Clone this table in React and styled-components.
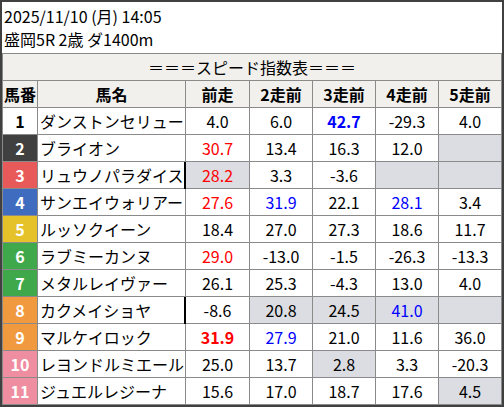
import React from "react";
import styled, { createGlobalStyle } from "styled-components";

const Global = createGlobalStyle`
  html, body { margin: 0; padding: 0; background: #ffffff; }
  body { font-family: "Noto Sans CJK JP", "Noto Sans", sans-serif; color: #000; }
`;

const Frame = styled.div`
  box-sizing: border-box;
  width: 504px;
  height: 407px;
  border: 2px solid #404040;
  background: #fff;
  display: flex;
  flex-direction: column;
`;

const Info = styled.div`
  height: 51px;
  box-sizing: border-box;
  padding: 3px 0 0 2px;
  font-size: 16px;
  line-height: 23px;
`;

const InfoLine = styled.div`
  white-space: nowrap;
`;

const Table = styled.div`
  display: grid;
  grid-template-columns: 35px 148px 64px 63px 63px 63px 63px;
  grid-auto-rows: 27px;
  border-top: 1px solid #8a8a8a;
  border-left: 1px solid #8a8a8a;
  font-size: 16px;
`;

const Cell = styled.div`
  box-sizing: border-box;
  border-right: 1px solid #8a8a8a;
  border-bottom: 1px solid #8a8a8a;
  line-height: 26px;
  white-space: nowrap;
  overflow: hidden;
`;

const Title = styled(Cell)`
  grid-column: 1 / -1;
  background: #f1f0ec;
  text-align: center;
`;

const Head = styled(Cell)`
  background: #f1f0ec;
  text-align: center;
  font-weight: 700;
`;

const Waku = styled(Cell)`
  text-align: center;
  font-weight: 700;
  background: ${(p) => p.$bg};
  color: ${(p) => p.$fg};
`;

const Name = styled(Cell)`
  padding-left: 2px;
`;

const Score = styled(Cell)`
  position: relative;
  overflow: visible;
  text-align: center;
  background: ${(p) => (p.$gray ? "#dcdde2" : "#ffffff")};
  color: ${(p) => (p.$c === "r" ? "#ff0000" : p.$c === "b" ? "#0000ff" : "#000000")};
  font-weight: ${(p) => (p.$bold ? 700 : 400)};
  &::before {
    content: "";
    display: ${(p) => (p.$mark ? "block" : "none")};
    position: absolute;
    left: -2px;
    top: 0;
    bottom: -1px;
    width: 2px;
    background: #000;
  }
`;

const W = {
  1: ["#ffffff", "#000000"],
  2: ["#404040", "#ffffff"],
  3: ["#e85a5a", "#ffffff"],
  4: ["#3f6cbf", "#ffffff"],
  5: ["#e6c22a", "#ffffff"],
  6: ["#3fa84a", "#ffffff"],
  7: ["#3fa84a", "#ffffff"],
  8: ["#f0993e", "#ffffff"],
  9: ["#f0993e", "#ffffff"],
  10: ["#ef8ea0", "#ffffff"],
  11: ["#ef8ea0", "#ffffff"],
};

// v: value, c: colour (r/b), B: bold, g: gray, m: mark
const rows = [
  { n: 1, name: "ダンストンセリュー", s: [{ v: "4.0" }, { v: "6.0" }, { v: "42.7", c: "b", B: 1 }, { v: "-29.3" }, { v: "4.0" }] },
  { n: 2, name: "ブライオン", s: [{ v: "30.7", c: "r" }, { v: "13.4" }, { v: "16.3" }, { v: "12.0" }, { v: "", g: 1 }] },
  { n: 3, name: "リュウノパラダイス", s: [{ v: "28.2", c: "r", g: 1, m: 1 }, { v: "3.3" }, { v: "-3.6" }, { v: "", g: 1 }, { v: "", g: 1 }] },
  { n: 4, name: "サンエイウォリアー", s: [{ v: "27.6", c: "r" }, { v: "31.9", c: "b" }, { v: "22.1" }, { v: "28.1", c: "b" }, { v: "3.4" }] },
  { n: 5, name: "ルッソクイーン", s: [{ v: "18.4" }, { v: "27.0" }, { v: "27.3" }, { v: "18.6" }, { v: "11.7" }] },
  { n: 6, name: "ラブミーカンヌ", s: [{ v: "29.0", c: "r" }, { v: "-13.0" }, { v: "-1.5" }, { v: "-26.3" }, { v: "-13.3" }] },
  { n: 7, name: "メタルレイヴァー", s: [{ v: "26.1" }, { v: "25.3" }, { v: "-4.3" }, { v: "13.0" }, { v: "4.0" }] },
  { n: 8, name: "カクメイショヤ", s: [{ v: "-8.6", m: 1 }, { v: "20.8", g: 1 }, { v: "24.5", g: 1 }, { v: "41.0", c: "b", g: 1 }, { v: "", g: 1 }] },
  { n: 9, name: "マルケイロック", s: [{ v: "31.9", c: "r", B: 1 }, { v: "27.9", c: "b" }, { v: "21.0" }, { v: "11.6" }, { v: "36.0" }] },
  { n: 10, name: "レヨンドルミエール", s: [{ v: "25.0" }, { v: "13.7" }, { v: "2.8", g: 1 }, { v: "3.3" }, { v: "-20.3" }] },
  { n: 11, name: "ジュエルレジーナ", s: [{ v: "15.6" }, { v: "17.0" }, { v: "18.7" }, { v: "17.6" }, { v: "4.5", g: 1 }] },
];

const heads = ["馬番", "馬名", "前走", "2走前", "3走前", "4走前", "5走前"];

export default function App() {
  return (
    <>
      <Global />
      <Frame>
        <Info>
          <InfoLine>2025/11/10 (月) 14:05</InfoLine>
          <InfoLine>盛岡5R 2歳 ダ1400m</InfoLine>
        </Info>
        <Table>
          <Title>＝＝＝スピード指数表＝＝＝</Title>
          {heads.map((h) => (
            <Head key={h}>{h}</Head>
          ))}
          {rows.map((r) => (
            <React.Fragment key={r.n}>
              <Waku $bg={W[r.n][0]} $fg={W[r.n][1]}>
                {r.n}
              </Waku>
              <Name>{r.name}</Name>
              {r.s.map((c, i) => (
                <Score key={i} $gray={!!c.g} $c={c.c} $bold={!!c.B} $mark={!!c.m}>
                  {c.v}
                </Score>
              ))}
            </React.Fragment>
          ))}
        </Table>
      </Frame>
    </>
  );
}
